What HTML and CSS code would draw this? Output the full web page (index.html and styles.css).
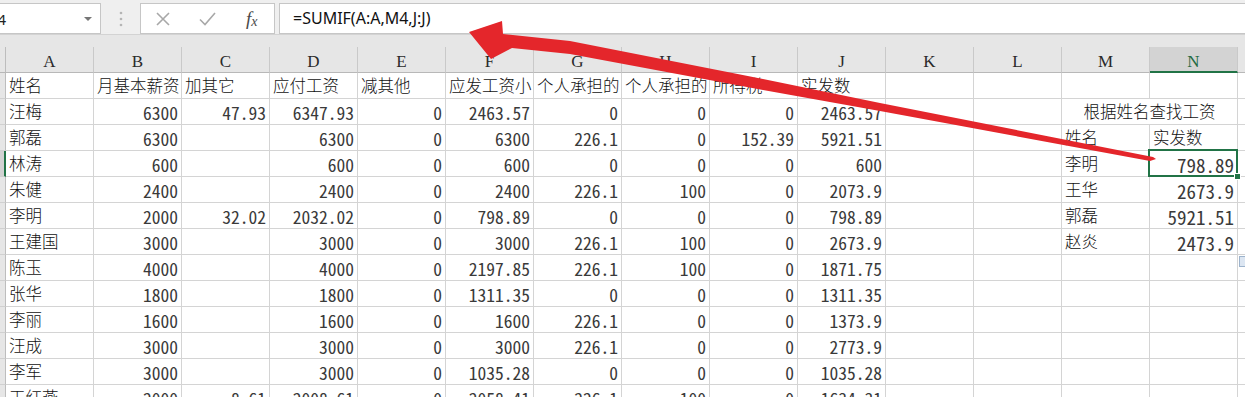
FILE: index.html
```html
<!DOCTYPE html>
<html lang="zh-CN">
<head>
    <meta charset="UTF-8">
    <meta name="viewport" content="width=device-width, initial-scale=1.0">
    <title>根据姓名查找工资</title>
    <link rel="stylesheet" href="styles.css">
</head>
<body>
    <div class="toolbar">
        <div class="name-box"><span class="cell-ref">N4</span><span class="caret"></span></div>
        <div class="grip">
            <svg width="4" height="16" viewBox="0 0 4 16"><circle cx="2" cy="2" r="1.3"/><circle cx="2" cy="8" r="1.3"/><circle cx="2" cy="14" r="1.3"/></svg>
        </div>
        <div class="fx-box">
            <span class="btn"><svg width="14" height="14" viewBox="0 0 14 14"><path d="M1 1L13 13M13 1L1 13"/></svg></span>
            <span class="btn"><svg width="17" height="14" viewBox="0 0 17 14"><path d="M1 7.5L6 12.5L16 1"/></svg></span>
            <span class="btn fx"><i>f</i><i class="sub">x</i></span>
        </div>
        <div class="formula">=SUMIF(A:A,M4,J:J)</div>
    </div>
    <div class="gap"></div>

    <div class="sheet">
        <div class="row head"><div class="rh"></div><div class="c">A</div><div class="c">B</div><div class="c">C</div><div class="c">D</div><div class="c">E</div><div class="c">F</div><div class="c">G</div><div class="c">H</div><div class="c">I</div><div class="c">J</div><div class="c">K</div><div class="c">L</div><div class="c">M</div><div class="c current">N</div><div class="o"></div></div>
        <div class="row"><div class="rh"></div><div class="c">姓名</div><div class="c">月基本薪资</div><div class="c">加其它</div><div class="c">应付工资</div><div class="c">减其他</div><div class="c">应发工资小</div><div class="c">个人承担的</div><div class="c">个人承担的</div><div class="c">所得税</div><div class="c">实发数</div><div class="c"></div><div class="c"></div><div class="c"></div><div class="c"></div><div class="o"></div></div>
        <div class="row"><div class="rh"></div><div class="c">汪梅</div><div class="c n">6300</div><div class="c n">47.93</div><div class="c n">6347.93</div><div class="c n">0</div><div class="c n">2463.57</div><div class="c n">0</div><div class="c n">0</div><div class="c n">0</div><div class="c n">2463.57</div><div class="c"></div><div class="c"></div><div class="c wide">根据姓名查找工资</div><div class="o"></div></div>
        <div class="row"><div class="rh"></div><div class="c">郭磊</div><div class="c n">6300</div><div class="c"></div><div class="c n">6300</div><div class="c n">0</div><div class="c n">6300</div><div class="c n">226.1</div><div class="c n">0</div><div class="c n">152.39</div><div class="c n">5921.51</div><div class="c"></div><div class="c"></div><div class="c">姓名</div><div class="c">实发数</div><div class="o"></div></div>
        <div class="row"><div class="rh active"></div><div class="c">林涛</div><div class="c n">600</div><div class="c"></div><div class="c n">600</div><div class="c n">0</div><div class="c n">600</div><div class="c n">0</div><div class="c n">0</div><div class="c n">0</div><div class="c n">600</div><div class="c"></div><div class="c"></div><div class="c">李明</div><div class="c n big sel">798.89</div><div class="o"></div></div>
        <div class="row"><div class="rh"></div><div class="c">朱健</div><div class="c n">2400</div><div class="c"></div><div class="c n">2400</div><div class="c n">0</div><div class="c n">2400</div><div class="c n">226.1</div><div class="c n">100</div><div class="c n">0</div><div class="c n">2073.9</div><div class="c"></div><div class="c"></div><div class="c">王华</div><div class="c n big">2673.9</div><div class="o"></div></div>
        <div class="row"><div class="rh"></div><div class="c">李明</div><div class="c n">2000</div><div class="c n">32.02</div><div class="c n">2032.02</div><div class="c n">0</div><div class="c n">798.89</div><div class="c n">0</div><div class="c n">0</div><div class="c n">0</div><div class="c n">798.89</div><div class="c"></div><div class="c"></div><div class="c">郭磊</div><div class="c n big">5921.51</div><div class="o"></div></div>
        <div class="row"><div class="rh"></div><div class="c">王建国</div><div class="c n">3000</div><div class="c"></div><div class="c n">3000</div><div class="c n">0</div><div class="c n">3000</div><div class="c n">226.1</div><div class="c n">100</div><div class="c n">0</div><div class="c n">2673.9</div><div class="c"></div><div class="c"></div><div class="c">赵炎</div><div class="c n big">2473.9</div><div class="o"></div></div>
        <div class="row"><div class="rh"></div><div class="c">陈玉</div><div class="c n">4000</div><div class="c"></div><div class="c n">4000</div><div class="c n">0</div><div class="c n">2197.85</div><div class="c n">226.1</div><div class="c n">100</div><div class="c n">0</div><div class="c n">1871.75</div><div class="c"></div><div class="c"></div><div class="c"></div><div class="c"></div><div class="o"></div></div>
        <div class="row"><div class="rh"></div><div class="c">张华</div><div class="c n">1800</div><div class="c"></div><div class="c n">1800</div><div class="c n">0</div><div class="c n">1311.35</div><div class="c n">0</div><div class="c n">0</div><div class="c n">0</div><div class="c n">1311.35</div><div class="c"></div><div class="c"></div><div class="c"></div><div class="c"></div><div class="o"></div></div>
        <div class="row"><div class="rh"></div><div class="c">李丽</div><div class="c n">1600</div><div class="c"></div><div class="c n">1600</div><div class="c n">0</div><div class="c n">1600</div><div class="c n">226.1</div><div class="c n">0</div><div class="c n">0</div><div class="c n">1373.9</div><div class="c"></div><div class="c"></div><div class="c"></div><div class="c"></div><div class="o"></div></div>
        <div class="row"><div class="rh"></div><div class="c">汪成</div><div class="c n">3000</div><div class="c"></div><div class="c n">3000</div><div class="c n">0</div><div class="c n">3000</div><div class="c n">226.1</div><div class="c n">0</div><div class="c n">0</div><div class="c n">2773.9</div><div class="c"></div><div class="c"></div><div class="c"></div><div class="c"></div><div class="o"></div></div>
        <div class="row"><div class="rh"></div><div class="c">李军</div><div class="c n">3000</div><div class="c"></div><div class="c n">3000</div><div class="c n">0</div><div class="c n">1035.28</div><div class="c n">0</div><div class="c n">0</div><div class="c n">0</div><div class="c n">1035.28</div><div class="c"></div><div class="c"></div><div class="c"></div><div class="c"></div><div class="o"></div></div>
        <div class="row"><div class="rh"></div><div class="c">王红燕</div><div class="c n">2000</div><div class="c n">8.61</div><div class="c n">2008.61</div><div class="c n">0</div><div class="c n">2058.41</div><div class="c n">226.1</div><div class="c n">100</div><div class="c n">0</div><div class="c n">1634.31</div><div class="c"></div><div class="c"></div><div class="c"></div><div class="c"></div><div class="o"></div></div>
    </div>

    <!-- hand-drawn pointer from N4 up to the formula bar -->
    <svg class="arrow" width="1245" height="397" viewBox="0 0 1245 397">
        <polygon points="469,32 502,21 503,34 570,41 763,79 880,103 1153,157 1156,159 1150,161 880,111 763,90 570,54 512,48 491,59"/>
    </svg>
    <div class="quick"></div>
</body>
</html>
```

FILE: styles.css
```css
body {
    margin: 0;
    width: 1245px;
    height: 397px;
    overflow: hidden;
    position: relative;
    background-color: #fff;
    font-family: "Noto Sans CJK SC", sans-serif;
    color: #111;
}
.toolbar {
    display: flex;
    height: 35px;
    box-sizing: border-box;
    padding-top: 3px;
    background-color: #efefef;
    border-bottom: 1px solid #d3d3d3;
}
.name-box {
    display: flex;
    align-items: center;
    width: 101px;
    height: 31px;
    box-sizing: border-box;
    background-color: #fff;
    border: 1px solid #c6c6c6;
    border-left: none;
    overflow: hidden;
}
.cell-ref {
    margin-left: -14px;
    font-family: "Noto Sans", sans-serif;
    font-size: 15px;
    color: #222;
}
.caret {
    margin-left: auto;
    margin-right: 8px;
    border-left: 4px solid transparent;
    border-right: 4px solid transparent;
    border-top: 4px solid #767676;
}
.grip {
    display: flex;
    align-items: center;
    justify-content: center;
    width: 39px;
    height: 31px;
}
.grip svg {
    fill: #b5b5b5;
}
.fx-box {
    display: flex;
    align-items: center;
    width: 135px;
    height: 31px;
    box-sizing: border-box;
    background-color: #fff;
    border: 1px solid #c6c6c6;
}
.btn {
    display: flex;
    align-items: center;
    justify-content: center;
    width: 45px;
    height: 29px;
}
.btn svg {
    fill: none;
    stroke: #a8a8a8;
    stroke-width: 1.6;
}
.fx {
    font-family: "Liberation Serif", serif;
    color: #4a4a4a;
}
.fx i {
    font-size: 19px;
}
.fx .sub {
    font-size: 14px;
    margin-top: 6px;
}
.formula {
    flex: 1;
    margin-left: 4px;
    height: 31px;
    box-sizing: border-box;
    padding-left: 13px;
    background-color: #fff;
    border: 1px solid #c6c6c6;
    border-right: none;
    font-family: "Noto Sans", sans-serif;
    font-size: 16px;
    line-height: 29px;
    color: #111;
}
.gap {
    height: 12px;
    background-color: #e6e6e6;
}
.row {
    display: flex;
    height: 26px;
}
.rh {
    flex: none;
    width: 6px;
    box-sizing: border-box;
    background-color: #e6e6e6;
    border-right: 1px solid #bdbdbd;
    border-bottom: 1px solid #d0d0d0;
}
.rh.active {
    background-color: #d2d2d2;
    border-right: 2px solid #217346;
}
.c {
    flex: none;
    width: 88px;
    box-sizing: border-box;
    padding: 0 3px;
    border-right: 1px solid #d4d4d4;
    border-bottom: 1px solid #d4d4d4;
    overflow: hidden;
    white-space: nowrap;
    font-size: 16.5px;
    font-weight: 300;
    line-height: 24px;
}
.n {
    text-align: right;
    font-family: "Noto Sans Mono CJK SC", "DejaVu Sans Mono", monospace;
    font-size: 17.5px;
    line-height: 28px;
    color: #3a3a3a;
}
.big {
    font-size: 19px;
}
.wide {
    width: 176px;
    text-align: center;
}
.sel {
    position: relative;
    overflow: visible;
}
.sel::before {
    content: "";
    position: absolute;
    top: -2px;
    left: -2px;
    right: -1px;
    bottom: -1px;
    border: 2px solid #217346;
}
.sel::after {
    content: "";
    position: absolute;
    right: -4px;
    bottom: -4px;
    width: 5px;
    height: 5px;
    background-color: #217346;
    border: 1px solid #fff;
    z-index: 1;
}
.o {
    flex: 1;
    border-bottom: 1px solid #d4d4d4;
}
.head .c,
.head .o,
.head .rh {
    background-color: #e6e6e6;
    border-bottom-color: #b8b8b8;
}
.head .c {
    border-right-color: #c9c9c9;
    text-align: center;
    font-family: "Liberation Serif", serif;
    font-size: 17px;
    font-weight: normal;
    line-height: 30px;
    color: #2a2a2a;
}
.head .c.current {
    background-color: #d3d3d3;
    color: #1f6a42;
    border-bottom: 2px solid #217346;
}
.arrow {
    position: absolute;
    top: 0;
    left: 0;
    pointer-events: none;
}
.arrow polygon {
    fill: #e4262b;
}
.quick {
    position: absolute;
    left: 1239px;
    top: 256px;
    width: 8px;
    height: 9px;
    background-color: #dce6f2;
    border: 1px solid #9db3cc;
}
```
